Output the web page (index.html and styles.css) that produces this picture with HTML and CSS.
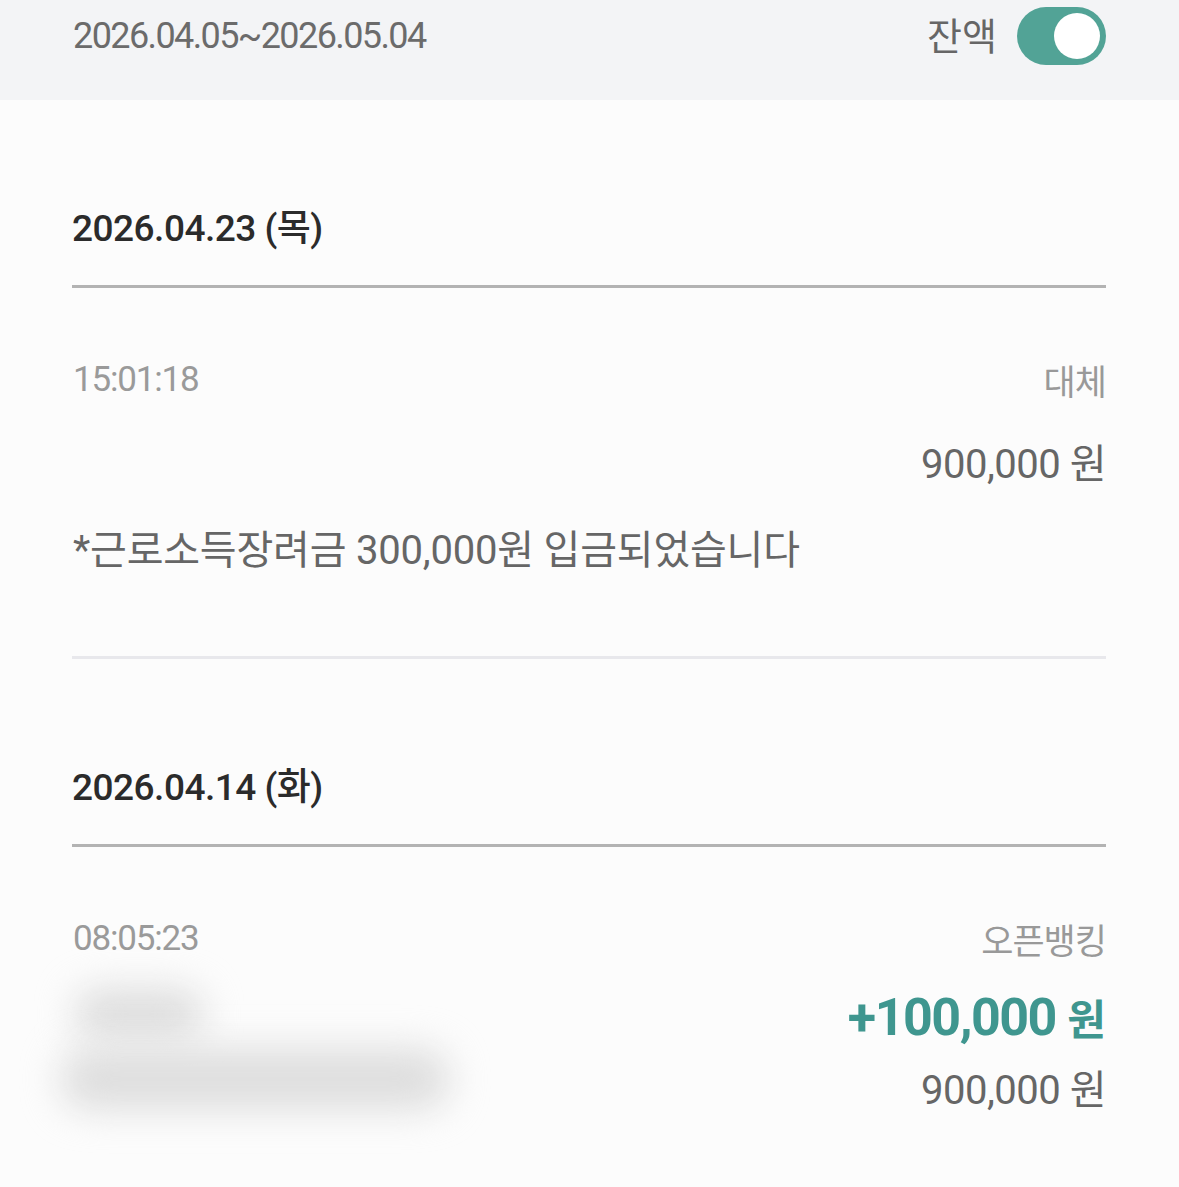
FILE: index.html
```html
<!DOCTYPE html>
<html lang="ko">
<head>
  <meta charset="UTF-8" />
  <meta name="viewport" content="width=device-width, initial-scale=1.0"/>
  <title>거래내역</title>
  <link rel="stylesheet" href="styles.css">
</head>
<body>
  <div class="top-bar">
    <span class="period">2026.04.05~2026.05.04</span>
    <div class="balance-switch">
      <span class="switch-label">잔액</span>
      <span class="switch on"><span class="knob"></span></span>
    </div>
  </div>

  <div class="list">
    <div class="day">
      <div class="day-title">2026.04.23 (목)</div>
      <div class="tx">
        <div class="tx-row">
          <span class="tx-time">15:01:18</span>
          <span class="tx-type">대체</span>
        </div>
        <div class="tx-balance">900,000 원</div>
        <div class="tx-memo">*근로소득장려금 300,000원 입금되었습니다</div>
      </div>
    </div>

    <div class="day">
      <div class="day-title">2026.04.14 (화)</div>
      <div class="tx last">
        <div class="tx-row">
          <span class="tx-time">08:05:23</span>
          <span class="tx-type">오픈뱅킹</span>
        </div>
        <div class="tx-body">
          <div class="hidden-memo">
            <span class="blur short"></span>
            <span class="blur long"></span>
          </div>
          <div class="tx-amounts">
            <div class="tx-amount plus">+100,000 <span class="won">원</span></div>
            <div class="tx-balance">900,000 원</div>
          </div>
        </div>
      </div>
    </div>
  </div>
</body>
</html>
```

FILE: styles.css
```css
body {
  margin: 0;
  font-family: Roboto, "Noto Sans CJK KR", sans-serif;
  background: #fcfcfc;
  color: #666;
}
.top-bar {
  display: flex;
  justify-content: space-between;
  align-items: center;
  height: 58px;
  padding: 7px 73px 35px 73px;
  background: #f3f4f6;
}
.period {
  font-size: 36px;
  color: #6b6b6b;
  letter-spacing: -1.6px;
}
.balance-switch {
  display: flex;
  align-items: center;
  gap: 20px;
}
.switch-label {
  font-size: 38px;
  color: #666;
  margin-top: -6px;
}
.switch {
  display: flex;
  align-items: center;
  justify-content: flex-end;
  width: 89px;
  height: 58px;
  padding: 0 6px;
  box-sizing: border-box;
  border-radius: 29px;
  background: #52a396;
}
.knob {
  width: 46px;
  height: 46px;
  border-radius: 50%;
  background: #fff;
}
.list {
  padding: 0 73px 0 72px;
}
.day-title {
  margin-top: 101px;
  padding-bottom: 28px;
  border-bottom: 3px solid #b3b3b3;
  font-size: 37px;
  line-height: 56px;
  font-weight: 500;
  color: #2b2b2b;
  letter-spacing: -0.5px;
}
.tx {
  padding: 67px 0 80px;
  border-bottom: 3px solid #e8e8ec;
}
.tx.last {
  border-bottom: none;
  padding-bottom: 60px;
}
.tx-row {
  display: flex;
  justify-content: space-between;
  align-items: center;
  height: 48px;
}
.tx-time {
  font-size: 35px;
  color: #9a9a9a;
  letter-spacing: -1.2px;
  padding-left: 1px;
}
.tx-type {
  font-size: 35px;
  color: #999;
  letter-spacing: -1px;
}
.tx-balance {
  margin-top: 37px;
  text-align: right;
  font-size: 40px;
  line-height: 50px;
  color: #666;
  letter-spacing: -0.5px;
}
.tx-memo {
  margin-top: 36px;
  padding-left: 1px;
  font-size: 40px;
  line-height: 50px;
  color: #666;
  letter-spacing: -0.2px;
}
.tx-body {
  display: flex;
  justify-content: space-between;
  margin-top: 26px;
}
.hidden-memo {
  display: flex;
  flex-direction: column;
  align-items: flex-start;
  gap: 8px;
  margin-left: -12px;
}
.blur {
  display: block;
  background: #dedede;
  filter: blur(18px);
  border-radius: 30px;
}
.blur.short {
  width: 130px;
  height: 52px;
  margin-left: 14px;
}
.blur.long {
  width: 390px;
  height: 62px;
}
.tx-amounts {
  text-align: right;
}
.tx-amount {
  font-size: 52px;
  line-height: 60px;
  font-weight: 700;
  letter-spacing: -1.5px;
}
.tx-amount.plus {
  color: #3f968f;
}
.won {
  font-size: 42px;
  letter-spacing: 0;
}
.tx-amounts .tx-balance {
  margin-top: 15px;
}
```
